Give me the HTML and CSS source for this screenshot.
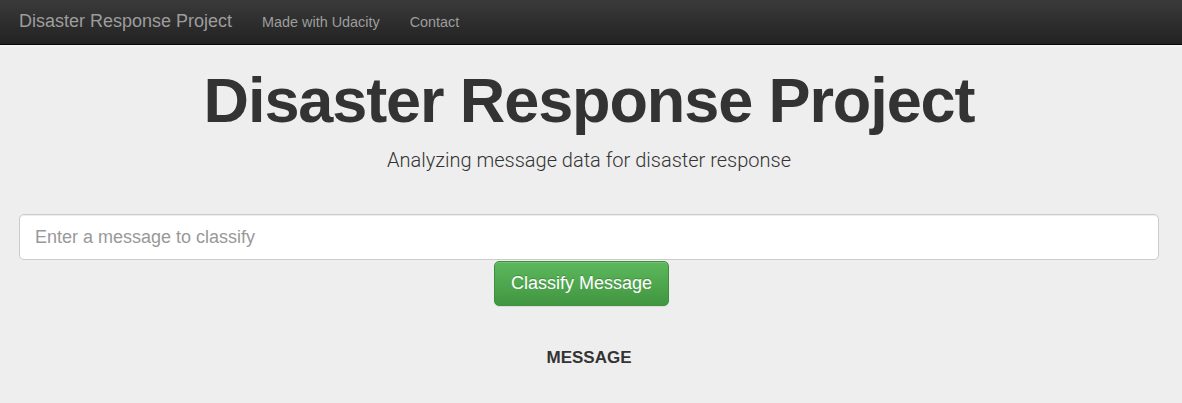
FILE: index.html
```html
<!DOCTYPE html>
<html lang="en">
<head>
<meta charset="utf-8">
<title>Disaster Response Project</title>
<link rel="stylesheet" href="styles.css">
</head>
<body>
<nav class="navbar">
  <a class="brand" href="#">Disaster Response Project</a>
  <ul class="nav-links">
    <li><a href="#">Made with Udacity</a></li>
    <li><a href="#">Contact</a></li>
  </ul>
</nav>
<main class="jumbotron">
  <h1 class="title">Disaster Response Project</h1>
  <p class="lead">Analyzing message data for disaster response</p>
  <form class="classify-form">
    <input class="message-input" type="text" placeholder="Enter a message to classify">
    <button class="btn-success" type="button">Classify Message</button>
  </form>
  <h2 class="section-label">MESSAGE</h2>
</main>
</body>
</html>
```
FILE: styles.css
```css
html, body {
  margin: 0;
  padding: 0;
  background: #eeeeee;
  font-family: "Liberation Sans", Arial, sans-serif;
  color: #333333;
}

.navbar {
  box-sizing: border-box;
  height: 45px;
  display: flex;
  align-items: baseline;
  padding: 11px 19px 0;
  background: linear-gradient(to bottom, #3a3a3a 0%, #222222 100%);
  border-bottom: 1px solid #080808;
}

.brand {
  font-size: 18px;
  line-height: 1.15;
  color: #9d9d9d;
  text-decoration: none;
  margin-right: 30px;
}

.nav-links {
  display: flex;
  align-items: baseline;
  gap: 30px;
  list-style: none;
  margin: 0;
  padding: 0;
}

.nav-links a {
  font-size: 14.4px;
  color: #9d9d9d;
  text-decoration: none;
}

.jumbotron {
  display: flex;
  flex-direction: column;
  align-items: center;
  padding: 0 23px 40px 19px;
  border-top: 2px solid #f3f3f3;
}

.title {
  margin: 19px 0 0;
  font-size: 63px;
  font-weight: 700;
  line-height: 1.1;
  color: #333333;
  letter-spacing: -1.1px;
}

.lead {
  margin: 13px 0 0;
  font-family: "Roboto", "Liberation Sans", sans-serif;
  font-weight: 300;
  font-size: 20px;
  line-height: 24px;
  color: #333333;
}

.classify-form {
  align-self: stretch;
  display: flex;
  flex-direction: column;
  align-items: center;
  margin-top: 42px;
}

.message-input {
  align-self: stretch;
  height: 46px;
  box-sizing: border-box;
  border: 1px solid #cccccc;
  border-radius: 5px;
  background: #ffffff;
  padding: 0 15px;
  font-family: "Liberation Sans", Arial, sans-serif;
  font-size: 18px;
  color: #555555;
  box-shadow: inset 0 1px 1px rgba(0,0,0,0.075);
}

.message-input::placeholder {
  color: #999999;
}

.btn-success {
  margin: 1px 15px 0 0;
  width: 175px;
  height: 45px;
  border: 1px solid #3e8f3e;
  border-radius: 5px;
  background: linear-gradient(to bottom, #5cb85c 0%, #419641 100%);
  color: #ffffff;
  font-family: "Liberation Sans", Arial, sans-serif;
  font-size: 18px;
  text-shadow: 0 -1px 0 rgba(0,0,0,0.2);
  box-shadow: inset 0 1px 0 rgba(255,255,255,0.15), 0 1px 1px rgba(0,0,0,0.075);
  cursor: pointer;
}

.section-label {
  margin: 42px 0 0;
  font-size: 17px;
  font-weight: 700;
  color: #333333;
}
```
